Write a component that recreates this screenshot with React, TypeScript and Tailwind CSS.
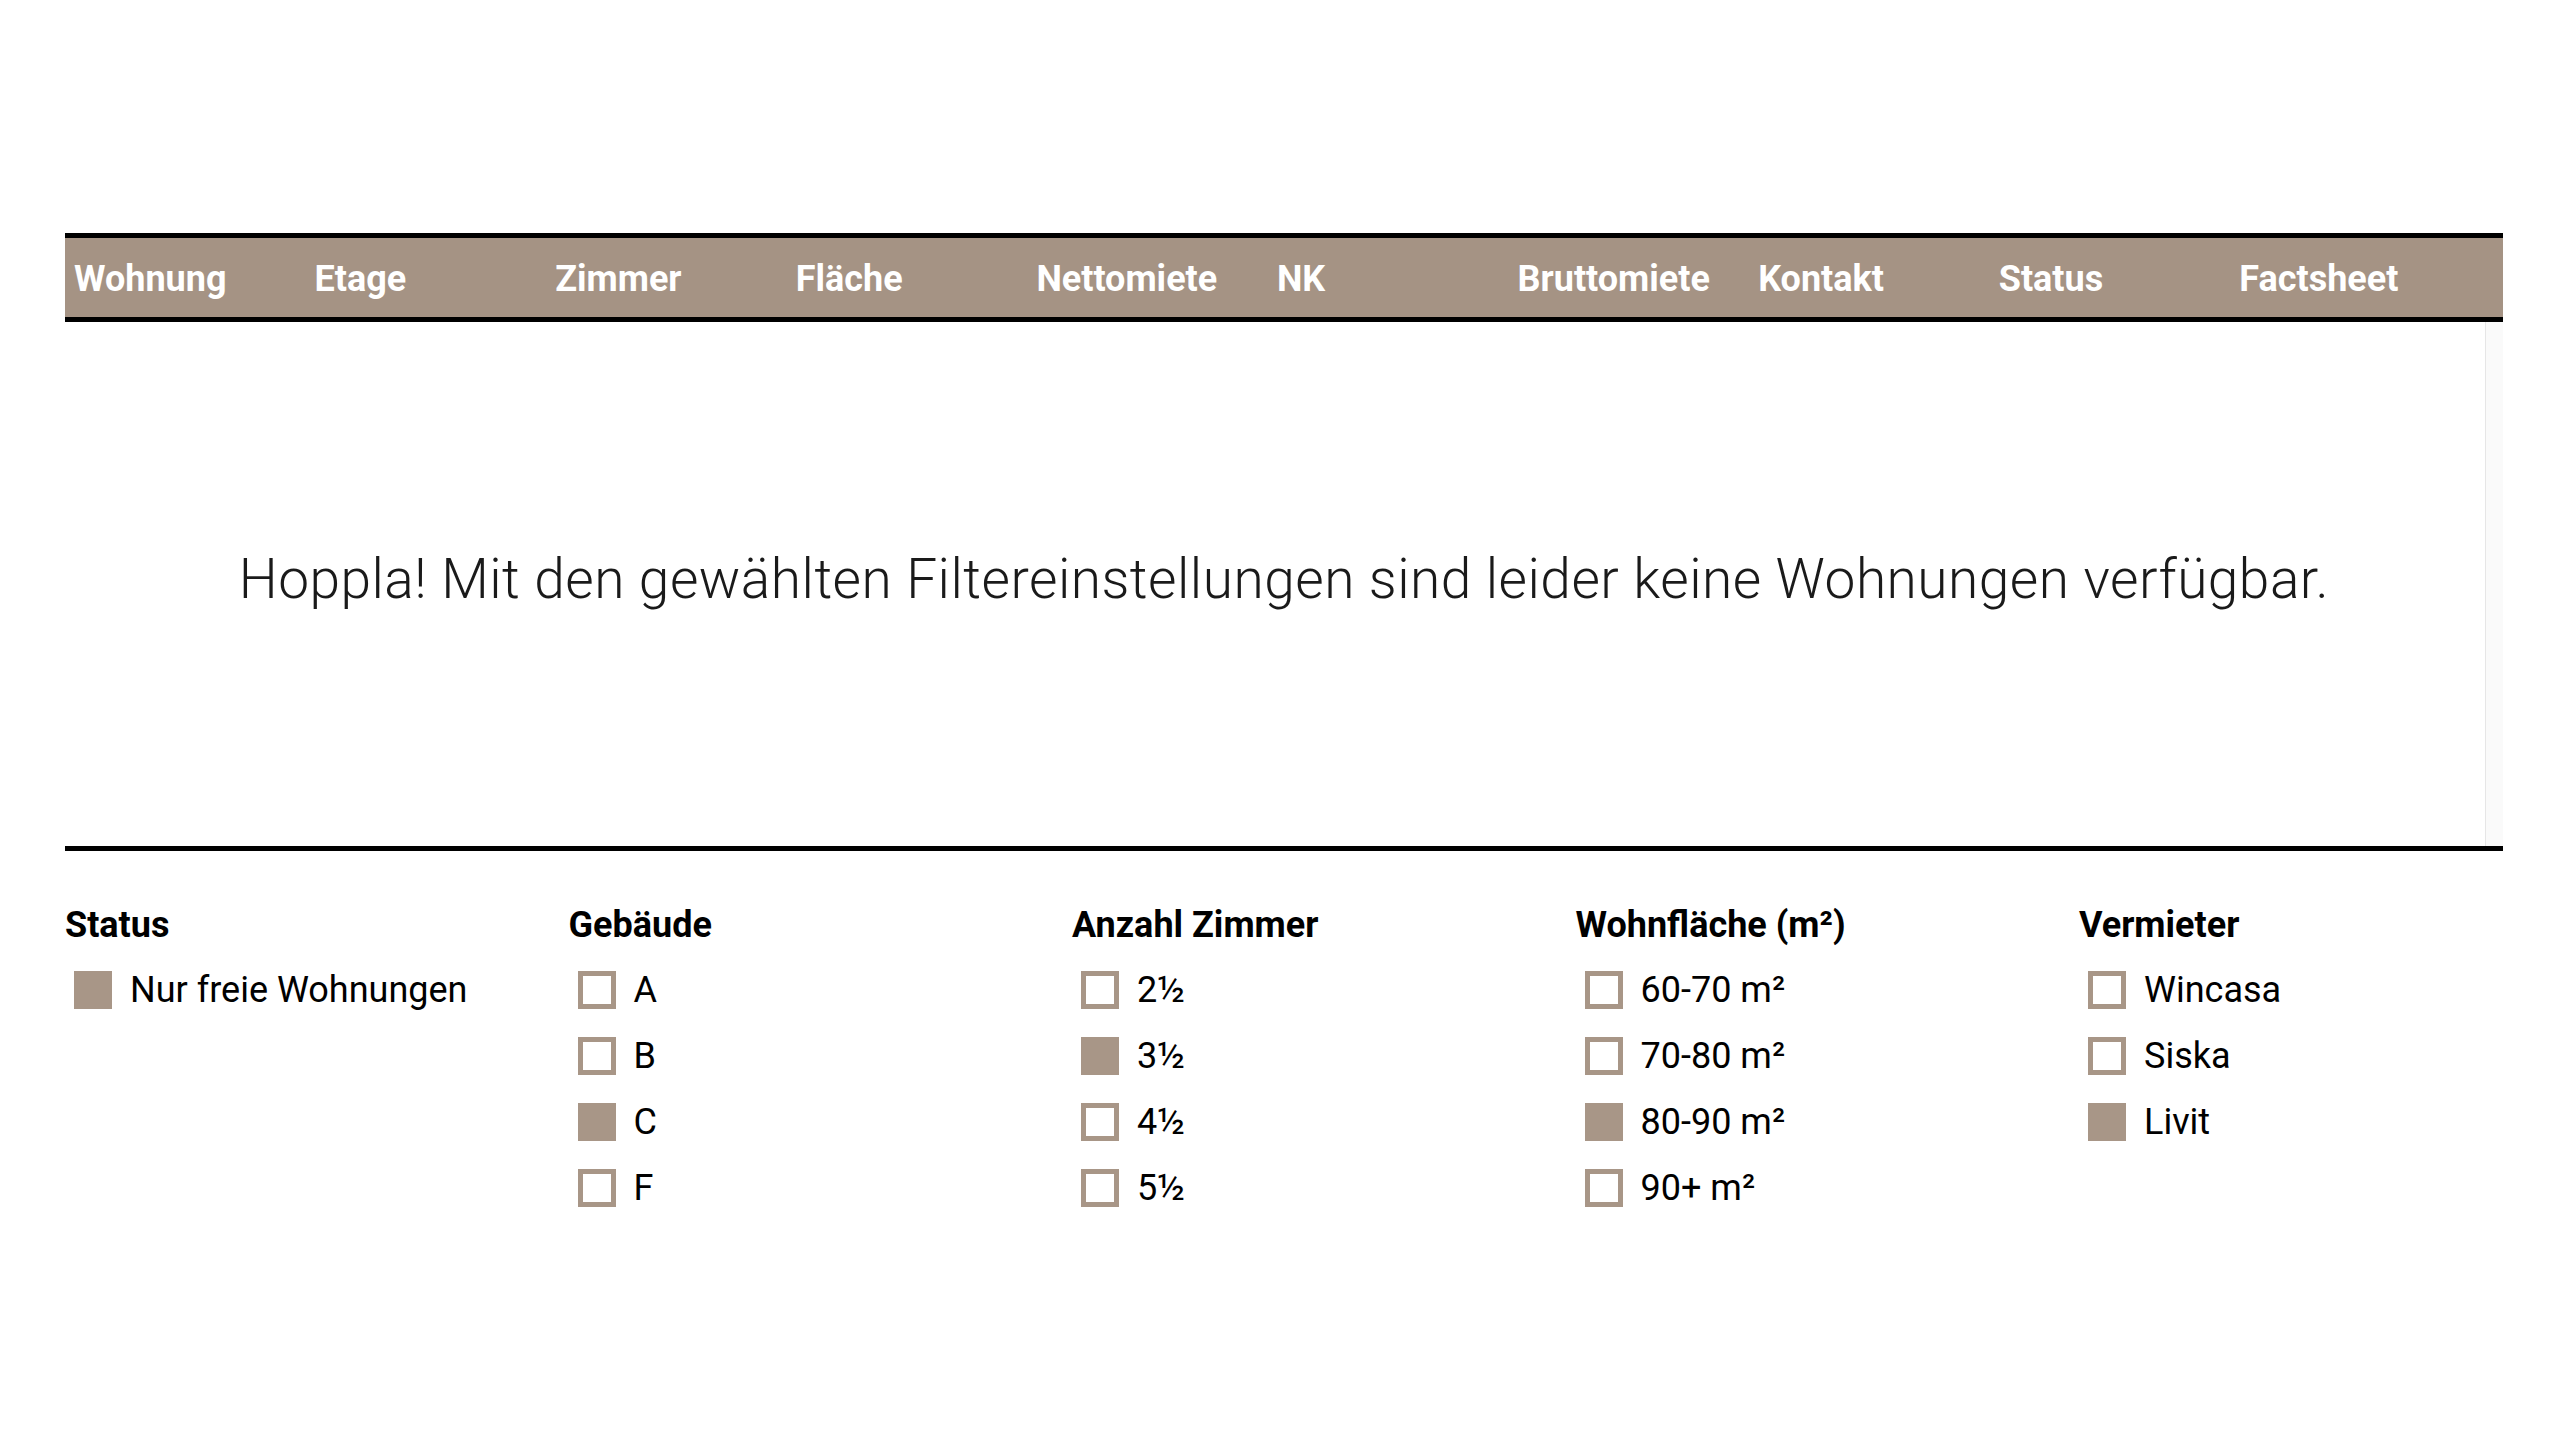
import React from "react";

const cols = ["Wohnung", "Etage", "Zimmer", "Fläche", "Nettomiete", "NK", "Bruttomiete", "Kontakt", "Status", "Factsheet"];

type Item = { label: string; checked: boolean };
const filters: { title: string; items: Item[] }[] = [
  { title: "Status", items: [{ label: "Nur freie Wohnungen", checked: true }] },
  {
    title: "Gebäude",
    items: [
      { label: "A", checked: false },
      { label: "B", checked: false },
      { label: "C", checked: true },
      { label: "F", checked: false },
    ],
  },
  {
    title: "Anzahl Zimmer",
    items: [
      { label: "2½", checked: false },
      { label: "3½", checked: true },
      { label: "4½", checked: false },
      { label: "5½", checked: false },
    ],
  },
  {
    title: "Wohnfläche (m²)",
    items: [
      { label: "60-70 m²", checked: false },
      { label: "70-80 m²", checked: false },
      { label: "80-90 m²", checked: true },
      { label: "90+ m²", checked: false },
    ],
  },
  {
    title: "Vermieter",
    items: [
      { label: "Wincasa", checked: false },
      { label: "Siska", checked: false },
      { label: "Livit", checked: true },
    ],
  },
];

export default function App() {
  return (
    <div className="min-h-screen w-full bg-white text-black" style={{ fontFamily: "Roboto, 'Liberation Sans', sans-serif" }}>
      <div className="ml-[65px] w-[2438px] pt-[233px]">
        <div className="grid h-[89px] grid-cols-[repeat(10,240.6px)] items-center border-y-[5px] border-black bg-[#a59384] pt-[2px]">
          {cols.map((c) => (
            <div key={c} className="pl-[9px] text-[36px] font-bold leading-none text-white">
              {c}
            </div>
          ))}
        </div>
        <div className="relative flex h-[529px] items-center justify-center border-b-[5px] border-black pb-[10px]">
          <p className="text-[55px] font-light tracking-[0.5px] text-[#1a1a1a]">
            Hoppla! Mit den gewählten Filtereinstellungen sind leider keine Wohnungen verfügbar.
          </p>
          <div className="absolute right-0 top-0 h-full w-[18px] border-l border-[#e6e6e6] bg-[#fafafa]" />
        </div>
        <div className="mt-[54px] flex">
          {filters.map((f) => (
            <div key={f.title} className="w-[503.5px] shrink-0">
              <h3 className="mb-[12px] text-[36px] font-bold leading-[40px]">{f.title}</h3>
              {f.items.map((it) => (
                <div key={it.label} className="flex h-[66px] items-center">
                  <span
                    className={
                      "ml-[9px] h-[38px] w-[38px] shrink-0 border-[5px] border-[#a89687] " +
                      (it.checked ? "bg-[#a89687]" : "bg-white")
                    }
                  />
                  <span className="ml-[18px] text-[36px] leading-none">{it.label}</span>
                </div>
              ))}
            </div>
          ))}
        </div>
      </div>
    </div>
  );
}
